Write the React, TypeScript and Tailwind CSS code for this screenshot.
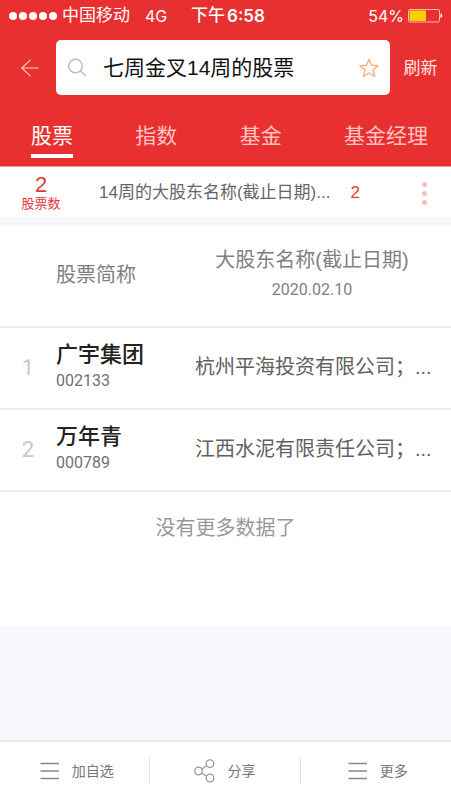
import React from "react";

const tabs = ["股票", "指数", "基金", "基金经理"];

const stocks = [
  { name: "广宇集团", code: "002133", holder: "杭州平海投资有限公司；..." },
  { name: "万年青", code: "000789", holder: "江西水泥有限责任公司；..." },
];

function StatusBar() {
  return (
    <div className="grid h-8 grid-cols-[1fr_auto_1fr] items-center pr-2 pl-[9px] text-[17px] leading-8">
      <div className="flex items-center">
        <div className="mr-[5px] flex gap-[2px]">
          {[0, 1, 2, 3, 4].map((i) => (
            <span key={i} className="size-2 rounded-full bg-white" />
          ))}
        </div>
        <span>中国移动</span>
        <span className="ml-[15px] font-['Inter'] text-base">4G</span>
      </div>
      <div className="flex gap-[2px] pl-1 font-medium">
        <span>下午</span>
        <span className="font-['Inter'] font-semibold">6:58</span>
      </div>
      <div className="flex items-center justify-end gap-1">
        <span className="font-['Inter'] text-base">54%</span>
        <svg width="35" height="14" viewBox="0 0 35 14" fill="none" aria-hidden="true">
          <rect x="0.5" y="0.5" width="31" height="12.5" rx="1.5" stroke="#f9b9b9" />
          <rect x="1.5" y="1.5" width="16.500" height="10.500" fill="#ffcc00" />
          <path d="M32.500 4.500c2.300.5 2.300 4 0 4.500z" fill="#fff" />
        </svg>
      </div>
    </div>
  );
}

function SearchBar() {
  return (
    <div className="flex items-center pt-2">
      <button type="button" aria-label="返回" className="flex w-14 shrink-0 items-center justify-center pl-1">
        <svg width="18" height="18" viewBox="0 0 18 18" fill="none" stroke="#ffd0d0" strokeWidth="1.1" aria-hidden="true">
          <path d="M17.500 9H.8M9.500.8.8 9l8.700 8.200" />
        </svg>
      </button>
      <div className="flex h-[55px] min-w-0 flex-1 items-center rounded-[5px] bg-white pr-[11px] pl-3">
        <svg className="shrink-0" width="19" height="19" viewBox="0 0 19 19" fill="none" stroke="#b9b9b9" strokeWidth="1.3" aria-hidden="true">
          <circle cx="7.500" cy="8" r="6.800" />
          <path d="m12.500 13 5.500 5" />
        </svg>
        <input
          type="text"
          aria-label="搜索"
          defaultValue="七周金叉14周的股票"
          className="ml-4 min-w-0 flex-1 bg-transparent text-[21px] leading-8 text-[#111] outline-none"
        />
        <button type="button" aria-label="收藏" className="shrink-0">
          <svg width="20" height="20" viewBox="0 0 20 20" fill="none" stroke="#fdb07c" strokeWidth="1.400" strokeLinejoin="round" aria-hidden="true">
            <path d="m10 1.300 2.500 6 6.500.5-5 4.200 1.600 6.400L10 15l-5.600 3.400L6 12 1 7.800l6.500-.5z" />
          </svg>
        </button>
      </div>
      <button type="button" className="w-[61px] shrink-0 pt-[2px] text-[17px] leading-6 text-[#ffe6e6]">
        刷新
      </button>
    </div>
  );
}

function MenuIcon() {
  return (
    <svg width="20" height="18" viewBox="0 0 20 18" stroke="#888" strokeWidth="1.600" aria-hidden="true">
      <path d="M.5 1.500h18.500M.5 9h18.500M.5 16.500h18.500" />
    </svg>
  );
}

function ShareIcon() {
  return (
    <svg width="21" height="24" viewBox="0 0 21 24" fill="none" stroke="#999" strokeWidth="1.300" aria-hidden="true">
      <circle cx="4.500" cy="12" r="3.800" />
      <circle cx="16" cy="4.700" r="3.800" />
      <circle cx="16" cy="19" r="3.800" />
      <path d="m7.700 10 5-3.200M7.700 14.200l5 2.800" />
    </svg>
  );
}

export default function App() {
  return (
    <div className="flex min-h-screen flex-col bg-[#f7f8fb] font-['Liberation_Sans','Noto_Sans_CJK_SC',sans-serif]">
      <header className="bg-[#e83030] text-white">
        <StatusBar />
        <SearchBar />
        <nav className="flex justify-between border-b border-[#f59a9a] pt-[26px] pr-[23px] pb-2 pl-[31px]">
          {tabs.map((tab, i) => (
            <button
              key={tab}
              type="button"
              className={
                i === 0
                  ? "border-b-4 border-white pb-[3px] text-[21px] leading-[30px]"
                  : "border-b-4 border-transparent pb-[3px] text-[21px] leading-[30px] text-[#ffc4c4]"
              }
            >
              {tab}
            </button>
          ))}
        </nav>
      </header>

      <section className="flex h-[50px] items-center bg-white pt-[2px]">
        <div className="w-[82px] shrink-0 text-center text-[#e5383b]">
          <div className="text-[22px] leading-[22px]">2</div>
          <div className="text-[13px] leading-4">股票数</div>
        </div>
        <p className="ml-[17px] text-[17px] leading-6 whitespace-nowrap text-[#666]">14周的大股东名称(截止日期)...</p>
        <span className="ml-5 text-[17px] leading-6 text-[#e5383b]">2</span>
        <button type="button" aria-label="更多条件" className="mr-6 ml-auto flex flex-col gap-1">
          <span className="size-[5px] rounded-full bg-[#fbbcbc]" />
          <span className="size-[5px] rounded-full bg-[#fbbcbc]" />
          <span className="size-[5px] rounded-full bg-[#fbbcbc]" />
        </button>
      </section>

      <main className="mt-2 bg-white pb-[82px]">
        <table className="w-full table-fixed border-collapse text-left">
          <colgroup>
            <col className="w-[56px]" />
            <col className="w-[139px]" />
            <col />
          </colgroup>
          <thead>
            <tr className="h-[102px] border-b-2 border-[#f0f0f1] text-[#808080]">
              <td />
              <th scope="col" className="pb-[2px] text-[20px] leading-7 font-normal">
                股票简称
              </th>
              <th scope="col" className="pr-[22px] pb-1 text-center font-normal">
                <div className="text-[20px] leading-8 whitespace-nowrap">大股东名称(截止日期)</div>
                <div className="font-['Roboto'] text-base leading-7">2020.02.10</div>
              </th>
            </tr>
          </thead>
          <tbody>
            {stocks.map((stock, i) => (
              <tr key={stock.code} className="h-[82px] border-b-2 border-[#f0f0f1]">
                <td className="text-center font-['Roboto'] text-[22px] leading-7 text-[#c8c8c8]">{i + 1}</td>
                <td className="pb-[2px]">
                  <div className="text-[22px] leading-7 font-medium text-[#222]">{stock.name}</div>
                  <div className="font-['Roboto'] text-base leading-6 text-[#707070]">{stock.code}</div>
                </td>
                <td className="pb-[2px] text-[20px] leading-7 whitespace-nowrap text-[#606060]">{stock.holder}</td>
              </tr>
            ))}
          </tbody>
        </table>
        <p className="pt-5 text-center text-[20px] leading-8 text-[#999]">没有更多数据了</p>
      </main>

      <footer className="mt-auto grid h-[60px] grid-cols-3 items-center border-t-2 border-[#ebebed] bg-white text-sm text-[#777]">
        <button type="button" className="flex h-7 items-center justify-center gap-3 border-r border-[#e6e6e6] pl-1">
          <MenuIcon />
          加自选
        </button>
        <button type="button" className="flex h-7 items-center justify-center gap-3 border-r border-[#e6e6e6]">
          <ShareIcon />
          分享
        </button>
        <button type="button" className="flex h-7 items-center justify-center gap-3 pl-1">
          <MenuIcon />
          更多
        </button>
      </footer>
    </div>
  );
}
